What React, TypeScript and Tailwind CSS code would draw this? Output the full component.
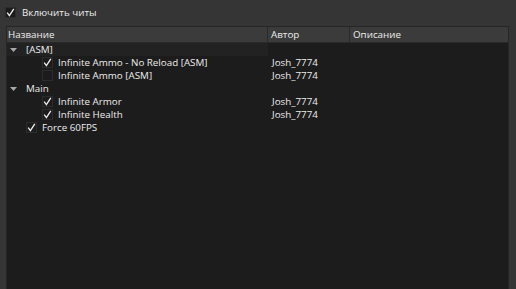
import React from "react";

const font = { fontFamily: '"Open Sans", "Noto Sans", sans-serif' };

function Check({ checked }: { checked: boolean }) {
  return (
    <div className="w-[11px] h-[11px] border border-[#2c2c2c] bg-[#1c1c1c] flex items-center justify-center shrink-0">
      {checked && (
        <svg width="9" height="9" viewBox="0 0 9 9">
          <path d="M1.2 4.6 L3.4 7.6 L7.8 0.8" stroke="#f0f0f0" strokeWidth="1.3" fill="none" />
        </svg>
      )}
    </div>
  );
}

function Arrow() {
  return (
    <svg width="7" height="4" viewBox="0 0 7 4" className="shrink-0">
      <path d="M0 0 L7 0 L3.5 4 Z" fill="#a8a8a8" />
    </svg>
  );
}

type Row = { level: number; group?: boolean; checked?: boolean; name: string; author?: string; focus?: boolean };

const rows: Row[] = [
  { level: 0, group: true, name: "[ASM]", focus: true },
  { level: 1, checked: true, name: "Infinite Ammo - No Reload [ASM]", author: "Josh_7774" },
  { level: 1, checked: false, name: "Infinite Ammo [ASM]", author: "Josh_7774" },
  { level: 0, group: true, name: "Main" },
  { level: 1, checked: true, name: "Infinite Armor", author: "Josh_7774" },
  { level: 1, checked: true, name: "Infinite Health", author: "Josh_7774" },
  { level: 0, checked: true, name: "Force 60FPS" },
];

export default function App() {
  return (
    <div className="w-[516px] h-[289px] bg-[#353535] flex flex-col overflow-hidden text-[9.8px] text-[#ededed]" style={font}>
      <div className="h-[26px] shrink-0 flex items-center pl-[5px] gap-[6px] pb-[1px]">
        <Check checked={true} />
        <span className="leading-[13px]">Включить читы</span>
      </div>
      <div className="ml-[6px] mr-[7px] flex-1 border border-[#262626] border-b-0 bg-[#1c1c1c] flex flex-col">
        <div className="h-[16px] bg-[#3b3b3b] flex shrink-0 border-b border-[#2a2a2a]">
          <div className="w-[261px] pl-[1px] border-r border-[#2a2a2a] leading-[16px]">Название</div>
          <div className="w-[82px] pl-[3px] border-r border-[#2a2a2a] leading-[16px]">Автор</div>
          <div className="flex-1 pl-[3px] leading-[16px]">Описание</div>
        </div>
        {rows.map((r, i) => (
          <div key={i} className="h-[13px] flex items-center">
            <div className={`w-[261px] h-[13px] flex items-center ${r.focus ? "bg-[#222222]" : ""}`}>
              {r.group ? (
                <div className="flex items-center">
                  <div className="w-[3px] shrink-0" />
                  <Arrow />
                  <span className="ml-[9px] leading-[12px] pt-[1px]">{r.name}</span>
                </div>
              ) : (
                <div className={`flex items-center gap-[5px] ${r.level === 1 ? "pl-[35px]" : "pl-[19px]"}`}>
                  <Check checked={!!r.checked} />
                  <span className="leading-[12px] pt-[1px]">{r.name}</span>
                </div>
              )}
            </div>
            <div className="w-[82px] pl-[4px] leading-[12px] pt-[1px]">{r.author ?? ""}</div>
            <div className="flex-1" />
          </div>
        ))}
      </div>
    </div>
  );
}
